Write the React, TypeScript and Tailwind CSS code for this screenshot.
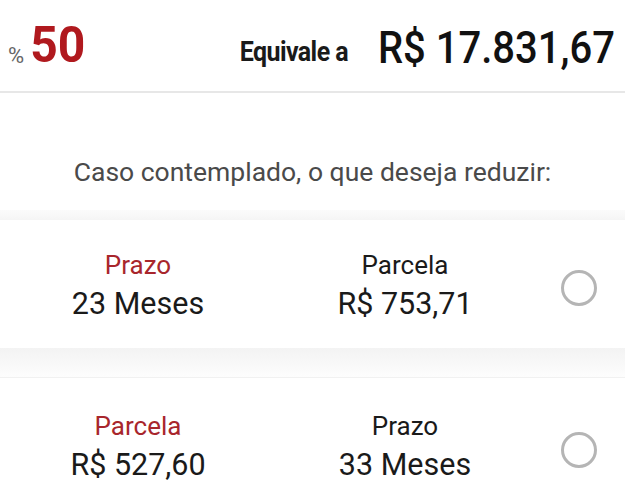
import React from "react";

const font = { fontFamily: "Roboto, 'Noto Sans', sans-serif" };

function Option({ l1, l2, r1, r2 }: { l1: string; l2: string; r1: string; r2: string }) {
  return (
    <div className="flex items-center">
      <div className="w-[276px] flex flex-col items-center">
        <div className="text-[26px] leading-[30px] text-[#a8262c]">{l1}</div>
        <div className="text-[30.5px] leading-[36px] mt-[5px] text-[#1a1a1a] scale-y-105">{l2}</div>
      </div>
      <div className="w-[258px] flex flex-col items-center">
        <div className="text-[26px] leading-[30px] text-[#1a1a1a]">{r1}</div>
        <div className="text-[30.5px] leading-[36px] mt-[5px] text-[#1a1a1a] scale-y-105">{r2}</div>
      </div>
      <div className="flex-1 flex justify-center pr-[2px]">
        <div className="w-[36px] h-[36px] rounded-full border-[3px] border-[#b5b5b5] mt-[6px]" />
      </div>
    </div>
  );
}

export default function App() {
  return (
    <div className="w-[625px] h-[500px] bg-white overflow-hidden" style={font}>
      <div className="h-[93px] flex items-end pb-[28px] border-b-2 border-[#e7e7e7]">
        <div className="flex items-end pl-[8px]">
          <span className="text-[22px] leading-[22px] text-[#666] -mb-[4px]">%</span>
          <span className="text-[48px] leading-[40px] font-bold text-[#b0191e] ml-[6px] scale-y-105 origin-bottom inline-block -mb-[3px]">50</span>
        </div>
        <div className="flex-1" />
        <span className="text-[25px] leading-[24px] font-bold text-[#1a1a1a] inline-block scale-y-110 origin-bottom tracking-[-0.6px] mr-[30px] -mb-[2px]">Equivale a</span>
        <span className="text-[40px] leading-[36px] font-medium text-[#111] inline-block scale-y-110 origin-bottom mr-[10px] -mb-[5px]">R$ 17.831,67</span>
      </div>
      <div className="h-[117px] flex items-center justify-center">
        <span className="text-[26.5px] text-[#4a4a4a] inline-block mt-[40px]">Caso contemplado, o que deseja reduzir:</span>
      </div>
      <div className="h-[10px] bg-gradient-to-b from-[#fbfbfb] to-[#f5f5f5]" />
      <div className="h-[128px] pt-[2px] flex flex-col justify-center">
        <Option l1="Prazo" l2="23 Meses" r1="Parcela" r2="R$ 753,71" />
      </div>
      <div className="h-[30px] bg-gradient-to-b from-[#f3f3f3] to-[#fdfdfd] border-b border-[#f1f1f1]" />
      <div className="h-[122px] pt-[15px] flex flex-col justify-center">
        <Option l1="Parcela" l2="R$ 527,60" r1="Prazo" r2="33 Meses" />
      </div>
    </div>
  );
}
